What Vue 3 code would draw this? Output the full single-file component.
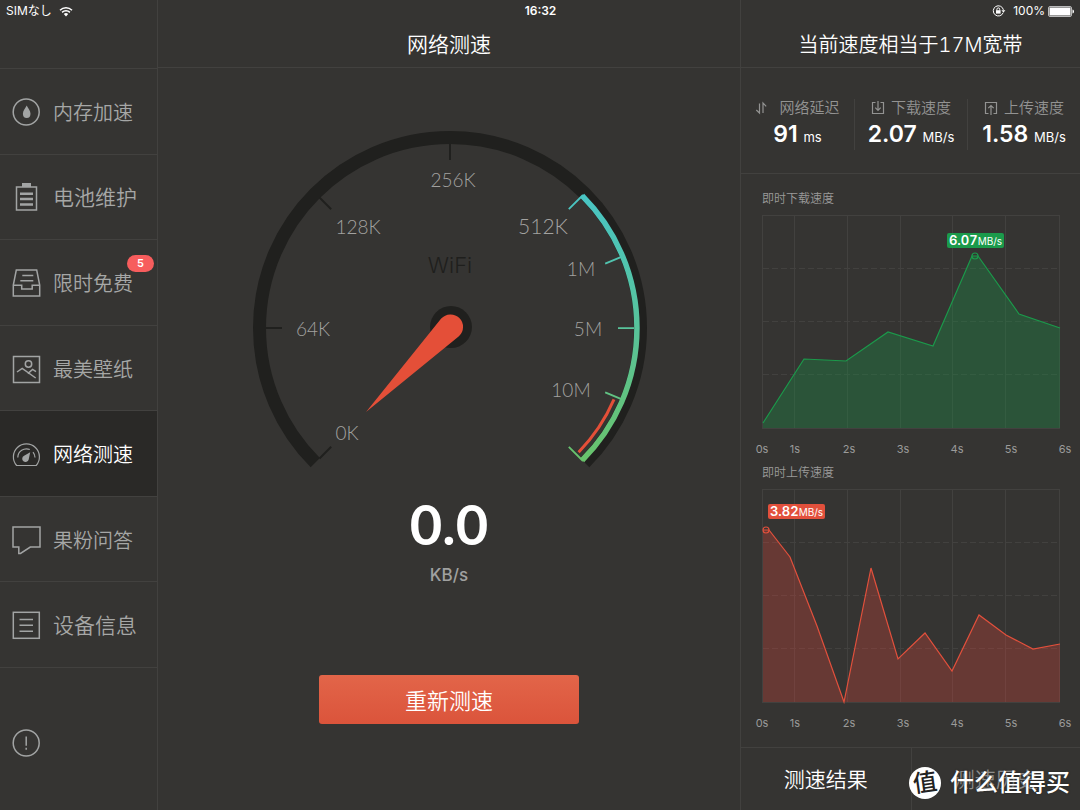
<script setup>
const navItems = [
  { icon: 'drop', label: '内存加速' },
  { icon: 'battery', label: '电池维护', wide: true },
  { icon: 'tray', label: '限时免费', badge: 5 },
  { icon: 'picture', label: '最美壁纸' },
  { icon: 'meter', label: '网络测速', active: true },
  { icon: 'chat', label: '果粉问答' },
  { icon: 'list', label: '设备信息', wide: true },
]

const stats = [
  { icon: 'latency', label: '网络延迟', value: '91', unit: 'ms' },
  { icon: 'download', label: '下载速度', value: '2.07', unit: 'MB/s' },
  { icon: 'upload', label: '上传速度', value: '1.58', unit: 'MB/s' },
]

const gaugeLabels = [
  { text: '0K', x: 347, y: 440 },
  { text: '64K', x: 313, y: 336 },
  { text: '128K', x: 358, y: 234 },
  { text: '256K', x: 453, y: 187 },
  { text: '512K', x: 543, y: 234, large: true },
  { text: '1M', x: 581, y: 276 },
  { text: '5M', x: 588, y: 336 },
  { text: '10M', x: 571, y: 397 },
]

const gridX = [54, 107, 160, 212, 265]
const gridY = [53, 106, 159]
const seconds = [
  { text: '0s', x: 21 },
  { text: '1s', x: 54 },
  { text: '2s', x: 108 },
  { text: '3s', x: 162 },
  { text: '4s', x: 216 },
  { text: '5s', x: 270 },
  { text: '6s', x: 324 },
]

const charts = [
  {
    id: 'down',
    title: '即时下载速度',
    line: '22,208 63,144 105,146 147,117 192,131 231,41 237,41 278,99 319,113',
    peak: { x: 234, y: 41 },
    tag: { x: 206, y: 18, value: '6.07' },
  },
  {
    id: 'up',
    title: '即时上传速度',
    line: '22,41 28,41 49,68 76,137 103,213 130,79 157,170 184,144 211,182 238,126 265,146 292,160 319,155',
    peak: { x: 25, y: 41 },
    tag: { x: 27, y: 15, value: '3.82' },
  },
]
</script>

<template>
  <div class="app">
    <div class="status">
      <div class="status-side">
        <span>SIMなし</span>
        <svg class="wifi" viewBox="0 0 14 11" aria-hidden="true">
          <path d="M1 4.2a8.6 8.6 0 0 1 12 0M3.1 6.4a5.6 5.6 0 0 1 7.8 0" />
          <path class="solid" d="M4.8 8.1a3.2 3.2 0 0 1 4.4 0L7 10.5z" />
        </svg>
      </div>
      <time class="clock">16:32</time>
      <div class="status-side end">
        <svg class="lock" viewBox="0 0 14 12" aria-hidden="true">
          <path d="M11.2 7.6A5.1 5.1 0 1 1 11.4 4.9" />
          <path d="M4.9 5.4V4.3a1.4 1.4 0 0 1 2.8 0v1.1" />
          <rect class="solid" x="4" y="5.2" width="4.600" height="3.400" />
          <path class="solid" d="M9.400 5.200h4L11.400 7.600z" />
        </svg>
        <span class="percent">100%</span>
        <svg class="power" viewBox="0 0 27 11" aria-hidden="true">
          <rect class="shell" x=".5" y=".5" width="23" height="10" rx="1.500" />
          <rect class="fill" x="1.500" y="1.500" width="21" height="8" />
          <path class="fill" d="M24.500 3.500c2 .4 2 3.600 0 4z" />
        </svg>
      </div>
    </div>

    <aside class="sidebar">
      <nav class="nav">
        <a v-for="item in navItems" :key="item.icon" href="#" class="nav-item" :class="{ active: item.active }">
          <svg class="nav-icon" viewBox="0 0 28 28" aria-hidden="true">
            <template v-if="item.icon === 'drop'">
              <circle cx="14.200" cy="14" r="13" />
              <path class="solid" d="M14.700 7.500c1.300 3 3.800 5.200 3.800 8.200a3.800 4.200 0 0 1-7.600 0c0-3 2.500-5.200 3.800-8.200z" />
            </template>
            <template v-else-if="item.icon === 'battery'">
              <rect x="4.500" y="4" width="20" height="23" />
              <path class="solid" d="M10 0h9v4h-9z" />
              <path class="thick" d="M8 10.700h13M8 16h13M8 21.400h13" />
            </template>
            <template v-else-if="item.icon === 'tray'">
              <path d="M4.300 1h20.400l3 15v11H1.300V16z" />
              <path d="M1.300 16.300h8.400V20h10.500v-3.700h7.500M10.300 6.500h11M8.300 11.800h13" />
            </template>
            <template v-else-if="item.icon === 'picture'">
              <rect x="1.500" y="1.500" width="26" height="26" />
              <circle cx="16.500" cy="9" r="3.200" />
              <path d="M5 17l5.200-3.500L23.700 23M15.800 18.600l4.800-4.200 3.400 2.300" />
            </template>
            <template v-else-if="item.icon === 'meter'">
              <path class="thin" d="M4.600 25.500a13 13 0 1 1 19.600 0z" />
              <path class="thin" d="M5.800 17.500a8.700 8.700 0 0 1 12-8M21 12.200a9 9 0 0 1 2 5.300" />
              <path class="solid" d="M18.200 12.300l-1.500 7.200a3.300 3.300 0 1 1-4.600-3.800z" />
            </template>
            <template v-else-if="item.icon === 'chat'">
              <path d="M1 1h27v20h-9.700L8.500 27.500H6.800V21H1z" />
            </template>
            <template v-else>
              <rect x="1.300" y="1.300" width="26" height="26" />
              <path d="M7.500 8.500h13.500M7.500 14.300h13.500M7.500 20.200h13.500" />
            </template>
          </svg>
          <span class="nav-label" :class="{ wide: item.wide }">{{ item.label }}</span>
          <span v-if="item.badge" class="badge">{{ item.badge }}</span>
        </a>
      </nav>
      <div class="side-foot">
        <button type="button" class="info" aria-label="关于">
          <svg class="nav-icon" viewBox="0 0 28 28" aria-hidden="true">
            <circle cx="14.200" cy="14" r="13" />
            <path d="M14.200 7.500v9.300M14.200 18.700v2" />
          </svg>
        </button>
      </div>
    </aside>

    <main class="main">
      <header class="bar"><h1>网络测速</h1></header>
      <svg class="gauge" viewBox="249 128 400 344" role="img" aria-label="0.0 KB/s">
        <defs>
          <linearGradient id="arc" gradientUnits="userSpaceOnUse" x1="0" y1="195" x2="0" y2="462">
            <stop offset="0" stop-color="#49c5c4" />
            <stop offset=".5" stop-color="#58c39a" />
            <stop offset="1" stop-color="#69c36b" />
          </linearGradient>
        </defs>
        <path class="ring" d="M315.300 462.700A190.500 190.500 0 1 1 584.700 462.700" />
        <path class="tick" d="M450 143v17M319.500 197.500l11.700 11.700M266 328h16M319.500 458.500l11.700-11.700" />
        <path class="arc" d="M582.200 195.800A187 187 0 0 1 582.200 460.200" />
        <path class="arc-tick" d="M583 195l-14.200 14.200M583 461l-14.200-14.200M622 256.700l-16.800 7M634 328.200h-16M622 399.300l-16.800-7" />
        <path class="limit" d="M614 399.300A178.800 178.800 0 0 1 578.600 452.200" />
        <circle class="hub" cx="451" cy="327" r="21" />
        <path class="needle" d="M366 412L441.200 318.600A12.500 12.500 0 1 1 458.900 336.200z" />
        <text class="net" x="450" y="273">WiFi</text>
        <text v-for="l in gaugeLabels" :key="l.text" class="mark" :class="{ large: l.large }" :x="l.x" :y="l.y">{{ l.text }}</text>
      </svg>
      <div class="speed">0.0</div>
      <div class="speed-unit">KB/s</div>
      <button type="button" class="retest">重新测速</button>
    </main>

    <section class="panel">
      <header class="bar"><h2>当前速度相当于17M宽带</h2></header>
      <dl class="stats">
        <div v-for="s in stats" :key="s.icon" class="stat">
          <dt>
            <svg class="stat-icon" :class="s.icon" :viewBox="s.icon === 'latency' ? '0 0 18 14' : '0 0 14 14'" aria-hidden="true">
              <path v-if="s.icon === 'latency'" d="M4.500 2.500v9.500L1.300 9M8 12V2l3.200 3.300" />
              <path v-else-if="s.icon === 'download'" d="M4.500 1.500h-3v11h11v-11h-3M7 0v9.300M4.300 6.600L7 9.300l2.700-2.700" />
              <path v-else d="M4.500 12.500h-3v-11h11v11h-3M7 14V4.500M4.300 7.200L7 4.500l2.700 2.700" />
            </svg>
            {{ s.label }}
          </dt>
          <dd>{{ s.value }} <small>{{ s.unit }}</small></dd>
        </div>
      </dl>
      <div class="charts">
        <figure v-for="c in charts" :key="c.id" class="chart" :class="c.id">
          <figcaption>{{ c.title }}</figcaption>
          <svg class="plot" viewBox="0 0 339 242" role="img" :aria-label="c.title">
            <rect class="frame" x="21.500" y=".5" width="297" height="213" />
            <path v-for="x in gridX" :key="'x' + x" class="grid" :d="`M${x - 0.5} 0V213`" />
            <path v-for="y in gridY" :key="'y' + y" class="grid dash" :d="`M22 ${y + 0.5}H319`" />
            <polygon class="area" :points="`22,213 ${c.line} 319,213`" />
            <polyline class="line" :points="c.line" />
            <circle class="dot" :cx="c.peak.x" :cy="c.peak.y" r="3" />
            <rect class="tag" :x="c.tag.x" :y="c.tag.y" width="57" height="15" rx="2" />
            <text class="tag-text" :x="c.tag.x + 28.5" :y="c.tag.y + 12">{{ c.tag.value }}<tspan class="tag-unit">MB/s</tspan></text>
            <text v-for="s in seconds" :key="s.text" class="axis" :x="s.x" y="238">{{ s.text }}</text>
          </svg>
        </figure>
      </div>
      <div class="tabs">
        <button type="button" class="tab current">测速结果</button>
        <button type="button" class="tab">测速历史</button>
      </div>
    </section>

    <div class="watermark">
      <span class="seal"><span>值</span></span>
      <span>什么值得买</span>
    </div>
  </div>
</template>

<style>
body {
  margin: 0;
  background: #353432;
}
</style>

<style scoped>
.app {
  position: relative;
  display: grid;
  grid-template-columns: 158px minmax(0, 1fr) 340px;
  min-height: 100vh;
  background: #353432;
  color: #fff;
  font-family: Inter, "Noto Sans CJK SC", sans-serif;
  font-weight: 350;
}
svg {
  display: block;
}
button {
  border: 0;
  padding: 0;
  background: none;
  color: inherit;
  font: inherit;
  cursor: pointer;
}
.status {
  position: absolute;
  top: 0;
  left: 0;
  right: 0;
  display: grid;
  grid-template-columns: 1fr auto 1fr;
  align-items: center;
  height: 22px;
  padding: 0 5px 0 6px;
  box-sizing: border-box;
  font-size: 12px;
  font-weight: 400;
  line-height: 20px;
}
.status-side {
  display: flex;
  align-items: center;
  height: 20px;
  gap: 7px;
}
.status-side.end {
  justify-content: flex-end;
}
.clock {
  font-weight: 600;
}
.wifi {
  width: 14px;
  height: 11px;
  fill: none;
  stroke: #fff;
  stroke-width: 1.5;
}
.wifi .solid,
.lock .solid {
  fill: #fff;
  stroke: none;
}
.lock {
  width: 14px;
  height: 12px;
  fill: none;
  stroke: #fff;
  stroke-width: 1;
}
.percent {
  margin-right: -4px;
}
.power {
  width: 27px;
  height: 11px;
}
.shell {
  fill: none;
  stroke: #bbb;
}
.fill {
  fill: #fff;
}

.sidebar {
  display: flex;
  flex-direction: column;
  border-right: 1px solid #42413f;
  padding-top: 68px;
}
.nav {
  flex: 1;
  display: flex;
  flex-direction: column;
  border-top: 1px solid #42413f;
}
.nav-item {
  position: relative;
  flex: 1;
  display: flex;
  align-items: center;
  gap: 13px;
  padding: 1px 0 0 12px;
  border-bottom: 1px solid #42413f;
  color: #a6a7a6;
  text-decoration: none;
}
.nav-item.active {
  background: #2a2927;
  color: #fff;
}
.nav-icon {
  width: 28px;
  height: 28px;
  overflow: visible;
  fill: none;
  stroke: #a2a4a4;
  stroke-width: 1.5;
}
.nav-icon .solid {
  fill: #a2a4a4;
  stroke: none;
}
.nav-icon .thick {
  stroke-width: 2.5;
}
.nav-icon .thin {
  stroke-width: 1.2;
}
.nav-label {
  padding-top: 2px;
  font-size: 20px;
  line-height: 28px;
}
.nav-label.wide {
  font-size: 21px;
}
.badge {
  position: absolute;
  top: 15px;
  right: 3px;
  width: 27px;
  border-radius: 9px;
  background: #f75d5d;
  color: #fff;
  font-size: 11px;
  font-weight: 600;
  line-height: 17px;
  text-align: center;
}
.side-foot {
  display: flex;
  align-items: center;
  height: 142px;
  padding: 8px 0 0 12px;
  box-sizing: border-box;
}

.bar {
  height: 68px;
  padding-top: 23px;
  box-sizing: border-box;
  border-bottom: 1px solid #42413f;
  flex: none;
  text-align: center;
}
.bar h1,
.bar h2 {
  margin: 0;
  font-size: 20px;
  font-weight: 350;
  line-height: 44px;
}
.bar h1 {
  font-size: 21px;
}
.bar h2 {
  font-variant-numeric: tabular-nums;
}
.main {
  display: flex;
  flex-direction: column;
  align-items: center;
}
.main .bar {
  align-self: stretch;
}
.gauge {
  width: 400px;
  max-width: 100%;
  margin-top: 60px;
}
.ring,
.tick,
.arc,
.arc-tick,
.limit {
  fill: none;
}
.ring {
  stroke: #20201e;
  stroke-width: 13;
}
.tick {
  stroke: #20201e;
  stroke-width: 2;
}
.arc {
  stroke: url(#arc);
  stroke-width: 5.5;
}
.arc-tick {
  stroke: url(#arc);
  stroke-width: 1.8;
}
.limit {
  stroke: #e44f38;
  stroke-width: 3;
}
.hub {
  fill: #20201e;
}
.needle {
  fill: #e44f38;
}
.mark,
.net {
  font-family: Lato, sans-serif;
  font-size: 19px;
  font-weight: 300;
  fill: #a3a2a0;
  text-anchor: middle;
}
.mark.large {
  font-size: 21px;
}
.net {
  font-family: Inter, sans-serif;
  font-size: 22px;
  fill: #1f1f1d;
}
.speed {
  margin-top: 20px;
  font-family: Lato, sans-serif;
  font-size: 56px;
  font-weight: 700;
  line-height: 64px;
}
.speed-unit {
  margin-top: 9px;
  color: #a0a1a0;
  font-size: 17px;
  font-weight: 500;
  line-height: 20px;
}
.retest {
  width: 260px;
  height: 49px;
  margin-top: 90px;
  padding-bottom: 2px;
  border-radius: 3px;
  background: linear-gradient(#e26549, #db543b);
  font-size: 22px;
}

.panel {
  display: flex;
  flex-direction: column;
  border-left: 1px solid #42413f;
}
.stats {
  display: grid;
  grid-template-columns: repeat(3, 1fr);
  height: 106px;
  margin: 0;
  padding: 31px 0 26px;
  box-sizing: border-box;
  border-bottom: 1px solid #42413f;
}
.stat {
  text-align: center;
}
.stat + .stat {
  border-left: 1px solid #42413f;
}
.stat dt {
  display: flex;
  justify-content: center;
  align-items: center;
  gap: 6px;
  color: #939392;
  font-size: 15px;
  line-height: 18px;
}
.stat-icon {
  width: 14px;
  height: 14px;
  fill: none;
  stroke: #939392;
  stroke-width: 1.2;
}
.stat-icon.latency {
  width: 18px;
}
.stat dd {
  margin: 4px 0 0;
  font-size: 23px;
  font-weight: 600;
  line-height: 26px;
  white-space: nowrap;
}
.stat small {
  font-size: 13px;
  font-weight: 400;
}
.charts {
  flex: 1;
  padding-top: 15px;
}
.chart {
  margin: 0 0 6px;
}
.chart figcaption {
  margin: 0 0 8px 21px;
  padding-top: 2px;
  color: #9b9b9a;
  font-size: 12px;
  line-height: 16px;
}
.plot {
  width: 100%;
}
.frame,
.grid {
  fill: none;
  stroke: #42413f;
}
.dash {
  stroke-dasharray: 6 3;
}
.line,
.dot {
  fill: none;
  stroke-width: 1.2;
}
.down .line,
.down .dot {
  stroke: #1b9a4b;
}
.down .area {
  fill: rgba(27, 146, 70, 0.34);
}
.down .tag {
  fill: #1b9a4b;
}
.up .line,
.up .dot {
  stroke: #e2503c;
}
.up .area {
  fill: rgba(220, 70, 60, 0.3);
}
.up .tag {
  fill: #e2503c;
}
.tag-text {
  fill: #fff;
  font-size: 13px;
  font-weight: 600;
  font-variant-numeric: tabular-nums;
  text-anchor: middle;
}
.tag-unit {
  font-size: 10px;
  font-weight: 400;
}
.axis {
  fill: #9b9b9a;
  font-size: 11px;
  font-weight: 400;
  text-anchor: middle;
}
.tabs {
  display: grid;
  grid-template-columns: 1fr 1fr;
  height: 63px;
  box-sizing: border-box;
  border-top: 1px solid #42413f;
}
.tab {
  padding-bottom: 3px;
  color: #8d8d8c;
  font-size: 21px;
}
.tab.current {
  color: #fff;
}
.tab + .tab {
  border-left: 1px solid #42413f;
}
.watermark {
  position: absolute;
  right: 10px;
  bottom: 10px;
  display: flex;
  align-items: center;
  gap: 9px;
  font-size: 24px;
  font-weight: 500;
  line-height: 34px;
  text-shadow: 0 0 2px #222;
}
.seal {
  width: 32px;
  height: 32px;
  border-radius: 50%;
  background: #fff;
  color: #222;
  font-size: 24px;
  line-height: 31px;
  text-align: center;
  text-shadow: none;
}
.seal span {
  display: block;
  transform: rotate(-8deg);
}
</style>
